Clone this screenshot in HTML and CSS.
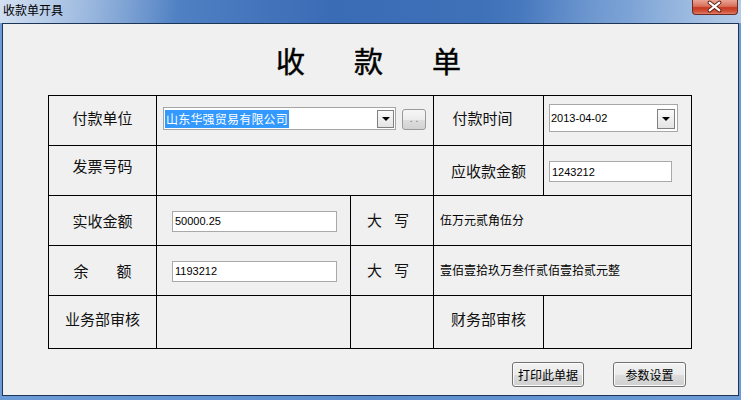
FILE: index.html
```html
<!DOCTYPE html>
<html lang="zh-CN">
<head>
<meta charset="utf-8">
<title>收款单开具</title>
<link rel="stylesheet" href="styles.css">
</head>
<body>
<div class="window">
  <div class="titlebar">
    <span class="title">收款单开具</span>
    <div class="close">
      <svg width="46" height="15" viewBox="0 0 46 15">
        <path d="M18 3.5 L28 11.5 M28 3.5 L18 11.5" stroke="#5a1a12" stroke-width="4" stroke-linecap="round"/>
        <path d="M18 3.5 L28 11.5 M28 3.5 L18 11.5" stroke="#ffffff" stroke-width="2.2" stroke-linecap="round"/>
      </svg>
    </div>
  </div>
  <div class="client">
    <div class="heading"><span>收</span><span>款</span><span>单</span></div>
    <div class="form">
      <div class="cell label r1">付款单位</div>
      <div class="cell span2 top">
        <div class="combo company"><span class="sel">山东华强贸易有限公司</span><span class="drop"><i></i></span></div>
        <div class="more">. .</div>
      </div>
      <div class="cell label r1 shift">付款时间</div>
      <div class="cell date-cell">
        <div class="combo date"><span class="val">2013-04-02</span><span class="drop"><i></i></span></div>
      </div>

      <div class="cell label up">发票号码</div>
      <div class="cell span2"></div>
      <div class="cell label">应收款金额</div>
      <div class="cell"><div class="textbox due">1243212</div></div>

      <div class="cell label">实收金额</div>
      <div class="cell"><div class="textbox amt">50000.25</div></div>
      <div class="cell big"><span>大</span><span>写</span></div>
      <div class="cell span2 words">伍万元贰角伍分</div>

      <div class="cell label"><span class="yu">余</span><span>额</span></div>
      <div class="cell"><div class="textbox amt">1193212</div></div>
      <div class="cell big"><span>大</span><span>写</span></div>
      <div class="cell span2 words">壹佰壹拾玖万叁仟贰佰壹拾贰元整</div>

      <div class="cell label r5">业务部审核</div>
      <div class="cell"></div>
      <div class="cell"></div>
      <div class="cell label r5">财务部审核</div>
      <div class="cell"></div>
    </div>
    <div class="actions">
      <div class="btn">打印此单据</div>
      <div class="btn">参数设置</div>
    </div>
  </div>
</div>
</body>
</html>
```

FILE: styles.css
```css
html, body {
  margin: 0;
  padding: 0;
}
body {
  width: 741px;
  height: 400px;
  overflow: hidden;
  font-family: "Noto Sans CJK SC", "Noto Sans", sans-serif;
}
.window {
  width: 741px;
  height: 400px;
  display: flex;
  flex-direction: column;
  background: linear-gradient(90deg, #6c9bd6 0%, #5c8dcd 50%, #6c9bd6 100%);
}
.titlebar {
  height: 23px;
  flex: none;
  display: flex;
  justify-content: space-between;
  align-items: flex-start;
  background:
    linear-gradient(100deg, rgba(255,255,255,0.6) 0%, rgba(255,255,255,0.3) 12%, rgba(255,255,255,0) 24%, rgba(255,255,255,0) 70%, rgba(255,255,255,0.15) 80%, rgba(255,255,255,0.35) 100%),
    linear-gradient(90deg, #8fb1dd 0%, #4e7fc2 25%, #3a6bb5 45%, #3f71b9 65%, #5d8dcc 85%, #8db0dc 100%);
}
.title {
  font-size: 12px;
  line-height: 12px;
  margin: 4px 0 0 3px;
  color: #000;
}
.close {
  width: 46px;
  height: 15px;
  margin-right: 3px;
  box-sizing: border-box;
  border: 1px solid #6b2a22;
  border-top: none;
  border-radius: 0 0 4px 4px;
  background: linear-gradient(#e9a594 0%, #d8705c 45%, #c6381f 55%, #d2573e 85%, #e1846c 100%);
  display: flex;
}
.close svg {
  display: block;
  margin: -1px 0 0 -1px;
}
.client {
  flex: 1;
  margin: 0 2px 4px 2px;
  border: 1px solid #1d3658;
  background: #f0f0f0;
  display: flex;
  flex-direction: column;
}
.heading {
  height: 71px;
  flex: none;
  display: flex;
  align-items: center;
  padding-left: 273px;
  gap: 49px;
  font-size: 29px;
  font-weight: 400;
  -webkit-text-stroke: 0.45px #000;
  color: #000;
  font-family: "Noto Sans CJK SC", sans-serif;
}
.form {
  margin-left: 45px;
  width: max-content;
  display: grid;
  grid-template-columns: 107px 193px 82px 109px 147px;
  grid-template-rows: 49px 49px 49px 49px 52px;
  gap: 1px;
  padding: 1px;
  background: #000;
}
.cell {
  background: #f0f0f0;
  display: flex;
  align-items: center;
  min-width: 0;
  box-sizing: border-box;
}
.span2 {
  grid-column: span 2;
}
.label {
  justify-content: center;
  font-size: 15px;
  color: #111;
}
.label.r1 {
  padding-bottom: 6px;
}
.label.r5 {
  padding-bottom: 8px;
}
.label.up {
  padding-bottom: 10px;
}
.label.shift {
  padding-right: 12px;
}
.yu {
  margin-right: 28px;
}
.top {
  align-items: flex-start;
  padding-top: 11px;
}
.combo {
  box-sizing: border-box;
  background: #fff;
  border: 1px solid #a5a5a5;
  display: flex;
  align-items: center;
  justify-content: space-between;
}
.company {
  width: 233px;
  height: 23px;
  margin-left: 6px;
  padding: 1px;
}
.sel {
  background: #3399ff;
  color: #fff;
  font-size: 12px;
  line-height: 18px;
  height: 18px;
  padding: 0 1px;
  letter-spacing: 0.2px;
}
.drop {
  width: 17px;
  height: 18px;
  box-sizing: border-box;
  border: 1px solid #808080;
  background: linear-gradient(#fafafa, #e4e4e4);
  display: flex;
  align-items: center;
  justify-content: center;
}
.drop i {
  width: 0;
  height: 0;
  border-left: 4px solid transparent;
  border-right: 4px solid transparent;
  border-top: 4px solid #000;
  margin-top: 1px;
}
.more {
  width: 24px;
  height: 21px;
  box-sizing: border-box;
  margin: 2px 0 0 6px;
  border: 1px solid #9a9a9a;
  border-radius: 3px;
  background: linear-gradient(#f6f6f6 0%, #ececec 50%, #dedede 51%, #d2d2d2 100%);
  font-size: 10px;
  line-height: 17px;
  text-align: center;
  color: #6b6b6b;
  font-family: "Liberation Sans", sans-serif;
}
.date-cell {
  align-items: flex-start;
  padding-top: 8px;
}
.date {
  width: 129px;
  height: 28px;
  margin-left: 5px;
  padding: 0 2px 0 1px;
  border-color: #a8a8a8;
}
.date .drop {
  width: 18px;
  height: 20px;
  margin-top: 1px;
}
.val, .textbox {
  font-family: "Liberation Sans", sans-serif;
  font-size: 11px;
  color: #000;
}
.textbox {
  box-sizing: border-box;
  background: #fff;
  border: 1px solid #a9a9a9;
  padding-left: 2px;
  display: flex;
  align-items: center;
}
.due {
  width: 123px;
  height: 21px;
  margin: 2px 0 0 5px;
}
.amt {
  width: 165px;
  height: 21px;
  margin: 1px 0 0 15px;
}
.big {
  justify-content: center;
  gap: 12px;
  font-size: 15px;
  color: #111;
  padding-right: 8px;
  padding-bottom: 2px;
}
.words {
  font-size: 12px;
  padding-left: 6px;
  padding-bottom: 2px;
  color: #000;
}
.actions {
  display: flex;
  gap: 29px;
  margin: 13px 0 0 509px;
}
.btn {
  box-sizing: border-box;
  width: 72px;
  height: 25px;
  border: 1px solid #707070;
  border-radius: 3px;
  box-shadow: inset 0 0 0 1px #fbfbfb;
  background: linear-gradient(#f2f2f2 0%, #ebebeb 50%, #dddddd 51%, #cfcfcf 100%);
  font-size: 12px;
  line-height: 23px;
  text-align: center;
  color: #000;
}
.btn + .btn {
  width: 73px;
}
```
